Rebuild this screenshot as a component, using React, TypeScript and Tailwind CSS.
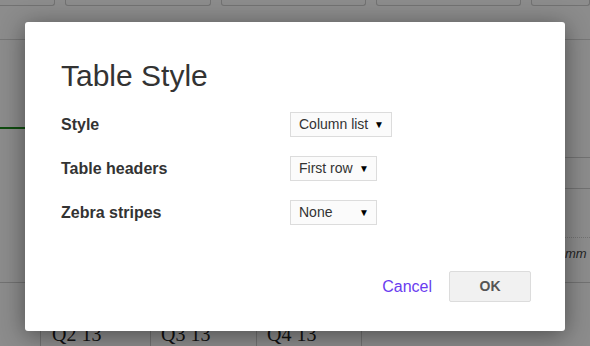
// Options shown in the dialog. Each one is a label plus the select's current value.
const ROWS = [
  { label: 'Style', value: 'Column list', width: 'w-[102px]' },
  { label: 'Table headers', value: 'First row', width: 'w-[87px]' },
  { label: 'Zebra stripes', value: 'None', width: 'w-[87px]' },
];

function Select({ value, width }: { value: string; width: string }) {
  return (
    <div className={`flex h-[25px] items-center justify-between border border-[#dcdcdc] bg-[#fbfbfb] pl-[8px] pr-[7px] text-[14px] text-[#333] ${width}`}>
      <span>{value}</span>
      <span className="text-[10px] text-black">▼</span>
    </div>
  );
}

function PageBehind() {
  return (
    <div className="flex h-full w-full flex-col bg-white">
      <div className="flex h-[40px] gap-[10px] border-b border-[#d8d8d8]">
        <div className="-ml-[10px] h-[6px] w-[66px] rounded-b-[3px] border border-t-0 border-[#cfcfcf]" />
        <div className="h-[6px] w-[147px] rounded-b-[3px] border border-t-0 border-[#cfcfcf]" />
        <div className="h-[6px] w-[146px] rounded-b-[3px] border border-t-0 border-[#cfcfcf]" />
        <div className="h-[6px] w-[146px] rounded-b-[3px] border border-t-0 border-[#cfcfcf]" />
        <div className="h-[6px] w-[60px] rounded-b-[3px] border border-t-0 border-[#cfcfcf]" />
      </div>
      <div className="flex flex-1">
        <div className="w-[25px] pt-[87px]">
          <div className="h-[2px] bg-[#1d8a1d]" />
        </div>
        <div className="flex-1" />
        <div className="flex w-[25px] flex-col">
          <div className="mt-[117px] h-[1px] bg-[#d0d0d0]" />
          <div className="mt-[30px] h-[1px] bg-[#d0d0d0]" />
          <div className="mt-[48px] h-0 border-t border-dotted border-[#d0d0d0]" />
          <div className="mt-[6px] text-[13px] italic text-[#444]">mm</div>
        </div>
      </div>
      <div className="flex h-[64px] border-t border-[#d0d0d0] font-['Liberation_Serif',serif] text-[20px] leading-[24px] text-[#222]">
        <div className="w-[41px] border-r border-[#d0d0d0]" />
        <div className="w-[110px] border-r border-[#d0d0d0] pl-[11px] pt-[39px]">Q2 13</div>
        <div className="w-[106px] border-r border-[#d0d0d0] pl-[10px] pt-[39px]">Q3 13</div>
        <div className="w-[105px] border-r border-[#d0d0d0] pl-[10px] pt-[39px]">Q4 13</div>
      </div>
    </div>
  );
}

export default function App() {
  return (
    <div className="relative h-[346px] w-[590px] overflow-hidden font-['Liberation_Sans',Arial,sans-serif]">
      <PageBehind />
      <div className="absolute inset-0 bg-black/45" />

      <div className="absolute left-[25px] top-[22px] flex h-[309px] w-[540px] flex-col rounded-[3px] bg-white px-[36px] pt-[35px] shadow-[0_4px_24px_rgba(0,0,0,0.45)]">
        <h1 className="text-[30px] leading-[37px] text-[#333]">Table Style</h1>

        <div className="mt-[18px] flex flex-col gap-[19px]">
          {ROWS.map((row) => (
            <div key={row.label} className="flex items-center">
              <span className="w-[229px] text-[16px] font-bold text-[#333]">{row.label}</span>
              <Select value={row.value} width={row.width} />
            </div>
          ))}
        </div>

        <div className="mt-[46px] flex items-center justify-end gap-[17px]">
          <span className="text-[16px] text-[#6a3cf0]">Cancel</span>
          <button className="-mr-[2px] h-[31px] w-[82px] rounded-[2px] border border-[#dcdcdc] bg-[#f1f1f1] text-[14px] font-bold text-[#555]">
            OK
          </button>
        </div>
      </div>
    </div>
  );
}
